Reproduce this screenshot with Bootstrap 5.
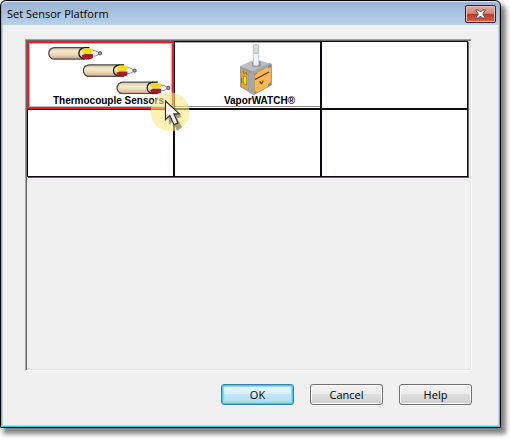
<!DOCTYPE html>
<html lang="en">
<head>
<meta charset="utf-8">
<meta name="viewport" content="width=device-width, initial-scale=1">
<title>Set Sensor Platform</title>
<link href="https://cdn.jsdelivr.net/npm/bootstrap@5.3.0/dist/css/bootstrap.min.css" rel="stylesheet">
<style>
body { font-family: "Open Sans", "Noto Sans", sans-serif; font-size: 11px; line-height: 16px; background: #fff; color: #000; }
.page { padding: 0 9px 12px 0; }
.dialog-window { background: #f0f0f0; border: 1px solid #000; border-radius: 6px 6px 0 0; box-shadow: inset 0 0 0 1px #45c4e0, inset 0 0 0 2px #bcd6f2, 4px 5px 5px 1px rgba(0,0,0,.5); padding: 0 2px 2px; }
.title-bar { height: 24px; margin: 0 -1px; padding: 0 3px 0 5px; background: linear-gradient(#99b4d2, #b9d1ea); border-radius: 5px 5px 0 0; border-top: 1px solid #dbe9f7; }
.title-bar h1 { font-size: 11px; line-height: 20px; padding-top: 2px; }
.close-btn { width: 31px; height: 18px; margin-top: 3px; border: 1px solid #48181c; border-radius: 2px; background: linear-gradient(#e7a79c, #d7877c 46%, #bd3a26 50%, #d4604a); box-shadow: inset 0 0 0 1px #eec0b8; }
.dialog-content { padding: 14px 26px 20px 22px; }
.platform-panel { min-height: 332px; border: 1px solid; border-color: #a0a0a0 #fff #fff #a0a0a0; box-shadow: inset 1px 1px 0 #696969, inset -1px -1px 0 #e3e3e3; padding: 1px 3px 1px 1px; }
.platform-grid { box-shadow: 1px 1px 0 #666; }
.platform { height: 68px; padding: 0; border: 1px solid #100810; border-radius: 0; background: #fff; font: bold 10px/12px "Liberation Sans", Arial, sans-serif; color: #000; }
.platform.selected { border: 2px solid #ed1c24; box-shadow: inset 0 0 0 1px #bbb; }
.platform.filled { box-shadow: inset 0 1px 0 #aaa, inset 0 -1px 0 #fff, inset 0 -2px 0 #888; }
.platform svg { display: block; height: 53px; }
.platform.selected span { padding-top: 1px; }
.pointer { left: 123px; top: 51px; pointer-events: none; z-index: 3; }
.action-btn { width: 73px; height: 21px; padding: 0; border: 1px solid #707070; border-radius: 3px; font-size: 11px; line-height: 18px; color: #000; background: linear-gradient(#f2f2f2, #ebebeb 48%, #dddddd 50%, #cfcfcf); box-shadow: inset 0 0 0 1px #fafafa; }
.action-btn.default { border-color: #3c7fb1; background: linear-gradient(#eaf6fd, #d9f0fc 48%, #c5e6f8 50%, #addaf3); box-shadow: inset 0 0 0 1px #43c7f2, inset 0 0 1px 2px #8bdcf7; }
.actions { gap: 16px; padding-top: 13px; }
</style>
<script src="https://cdn.jsdelivr.net/npm/bootstrap@5.3.0/dist/js/bootstrap.bundle.min.js"></script>
</head>
<body>
<div class="page">
<main class="dialog-window" role="dialog" aria-labelledby="dialog-heading">
  <header class="title-bar d-flex justify-content-between align-items-start">
    <h1 id="dialog-heading" class="fw-normal mb-0">Set Sensor Platform</h1>
    <button type="button" class="close-btn p-0 d-flex align-items-center justify-content-center" aria-label="Close">
      <svg width="13" height="10" viewBox="0 0 13 10"><path d="M1.500 1h3l2 2 2-2h3L8.700 5l2.800 4h-3l-2-2-2 2h-3l2.800-4z" fill="#fff" stroke="#4b4f5a"/></svg>
    </button>
  </header>
  <div class="dialog-content">
    <section class="platform-panel" aria-label="Platforms">
      <div class="platform-grid row row-cols-3 g-0">
        <div class="col position-relative">
          <button type="button" class="platform selected w-100 d-flex flex-column align-items-center">
            <svg width="143" viewBox="0 0 143 53">
              <defs>
                <linearGradient id="tube" x2="0" y2="1"><stop stop-color="#cfc5a0"/><stop offset=".35" stop-color="#f6ebcd"/><stop offset=".65" stop-color="#ecd7b5"/><stop offset="1" stop-color="#c9a08a"/></linearGradient>
                <g id="probe">
                  <path d="M45 3.500q5 0 8 2.500M45 10q5 0 8-2.500" stroke="#666" stroke-width=".8" fill="#fff"/>
                  <circle cx="54" cy="6.700" r="1.700" fill="#999" stroke="#555"/>
                  <path d="M38 .7H6.700a6 6 0 0 0 0 12H38" fill="url(#tube)" stroke="#4c4c4c" stroke-width="1.300"/>
                  <path d="M36 .7h6l3 3v6l-3 3h-6z" fill="#ead7b5"/>
                  <path d="M43 12.500h-5q-6-1-6-5.800 0-5 6-6h5" fill="none" stroke="#111" stroke-width="1.300"/>
                  <path d="M36 2q5-1 10.500 0v3.500l-4 1.500h-5l-2-2z" fill="#f0dd12"/>
                  <path d="M35 9l3-1.500h8.500v4l-2 1h-8z" fill="#a81d22"/>
                </g>
              </defs>
              <use href="#probe" x="17" y="4"/>
              <use href="#probe" x="53" y="22"/>
              <use href="#probe" x="88" y="40"/>
            </svg>
            <span class="ps-3">Thermocouple Sensors</span>
          </button>
          <svg class="pointer position-absolute" width="40" height="42" viewBox="0 0 40 42" aria-hidden="true">
            <circle cx="20" cy="20" r="19.500" fill="#fbea80" fill-opacity=".6"/>
            <path d="M18 12l14 13-5 1 5 9-5 4-4-10-4 4z" fill="#000" opacity=".35"/>
            <path d="M15.500 9v18.500l4.300-4 4.200 9.300 4-1.900-4.200-9h5.500z" fill="#fff" stroke="#333" stroke-width="1.200"/>
          </svg>
        </div>
        <div class="col">
          <button type="button" class="platform filled w-100 d-flex flex-column align-items-center">
            <svg width="145" viewBox="0 0 145 53">
              <path d="M65 24l16-7 15 5-17 10z" fill="#bcc0c4"/>
              <path d="M65 24l14 6v23l-14-8z" fill="#999ea5"/>
              <path d="M66 27l7 3v18l-7-4z" fill="#eca12d"/>
              <path d="M76 30l19-9 2 1v21L79 53l-5-2V31z" fill="#a2a6ac"/>
              <path d="M79.500 32L96 23v20L79.500 52z" fill="#fdb650" stroke="#b68a48" stroke-width=".5"/>
              <path d="M68.500 34l3 1v8l-3-1.500z" fill="#eaf016" stroke="#776924" stroke-width=".6"/>
              <path d="M68 29l1 3m2-2l1 3M66.700 36v5" stroke="#946b2b" stroke-width="1.200"/>
              <path d="M80 37.500l14-7.500" stroke="#47392b" stroke-width="1.200"/>
              <path d="M84 39.500l5-1-2 4-2-1z" fill="#555"/><circle cx="86.500" cy="39.500" r=".8" fill="#ddd"/>
              <path d="M79 32l3-1.500v1L79 34zm14-8l3-1.500V25l-3 1.500zM79.500 49v3l3-2zm13.500-7l3-1.500V43l-3 2z" fill="#888"/>
              <path d="M77 20q5-2 9 0v4q-5 2.500-9 0z" fill="#92969b"/>
              <path d="M78.500 10h5v13q-2.500 1.500-5 0z" fill="#f1f2f3" stroke="#c4c7ca" stroke-width=".7"/>
              <path d="M78.500 3q2.500-1.500 5 0v8q-2.500 1.500-5 0z" fill="#d7dadd" stroke="#aaaeb1" stroke-width=".7"/>
            </svg>
            <span class="ps-4">VaporWATCH®</span>
          </button>
        </div>
        <div class="col"><button type="button" class="platform w-100 d-block" aria-label="Empty slot 3"></button></div>
        <div class="col"><button type="button" class="platform w-100 d-block" aria-label="Empty slot 4"></button></div>
        <div class="col"><button type="button" class="platform w-100 d-block" aria-label="Empty slot 5"></button></div>
        <div class="col"><button type="button" class="platform w-100 d-block" aria-label="Empty slot 6"></button></div>
      </div>
    </section>
    <footer class="actions d-flex justify-content-end">
      <button type="button" class="action-btn default">OK</button>
      <button type="button" class="action-btn">Cancel</button>
      <button type="button" class="action-btn">Help</button>
    </footer>
  </div>
</main>
</div>
</body>
</html>
